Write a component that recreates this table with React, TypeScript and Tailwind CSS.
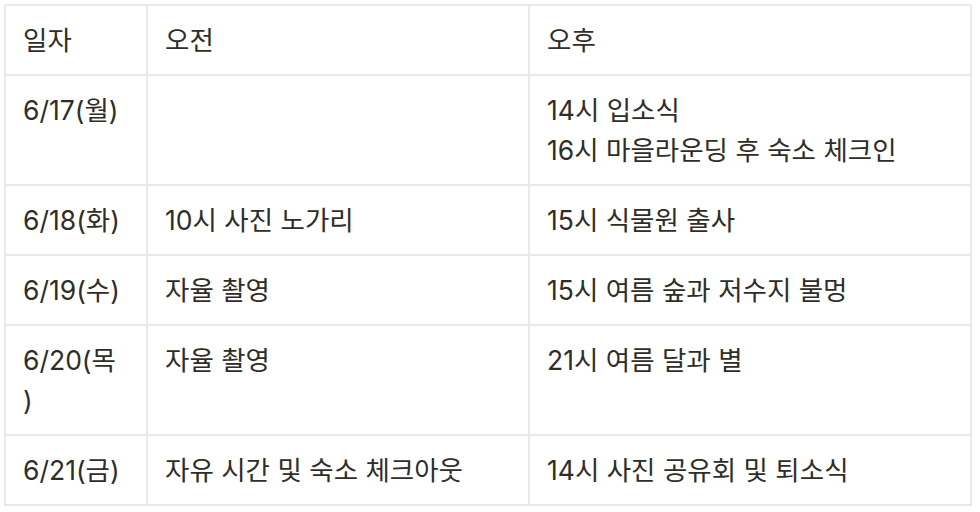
const rows: { date: React.ReactNode; am: string; pm: string[] }[] = [
  { date: "6/17(월)", am: "", pm: ["14시 입소식", "16시 마을라운딩 후 숙소 체크인"] },
  { date: "6/18(화)", am: "10시 사진 노가리", pm: ["15시 식물원 출사"] },
  { date: "6/19(수)", am: "자율 촬영", pm: ["15시 여름 숲과 저수지 불멍"] },
  {
    date: (
      <>
        6/20(목
        <br />)
      </>
    ),
    am: "자율 촬영",
    pm: ["21시 여름 달과 별", ""],
  },
  { date: "6/21(금)", am: "자유 시간 및 숙소 체크아웃", pm: ["14시 사진 공유회 및 퇴소식"] },
];

const cell =
  "border-r-2 border-b-2 border-[#e9e9e7] pl-[17px] pr-[8px] py-[14px] align-top";

export default function App() {
  return (
    <div className="min-h-screen bg-white pl-[4px] pt-[4px] font-['Inter','Noto_Sans_CJK_KR',sans-serif] text-[#2f2d28] text-[26.5px] leading-[40px]">
      <table className="border-separate border-spacing-0 border-l-2 border-t-2 border-[#e9e9e7] table-fixed w-[968px]">
        <colgroup>
          <col className="w-[142px]" />
          <col className="w-[382px]" />
          <col className="w-[442px]" />
        </colgroup>
        <tbody>
          <tr>
            <td className={cell}>일자</td>
            <td className={cell}>오전</td>
            <td className={cell}>오후</td>
          </tr>
          {rows.map((r, i) => (
            <tr key={i}>
              <td className={cell}>
                <div className="whitespace-nowrap">{r.date}</div>
              </td>
              <td className={cell}>{r.am}</td>
              <td className={cell}>
                {r.pm.map((line, j) => (
                  <div key={j} className="h-[40px] whitespace-nowrap">
                    {line}
                  </div>
                ))}
              </td>
            </tr>
          ))}
        </tbody>
      </table>
    </div>
  );
}
